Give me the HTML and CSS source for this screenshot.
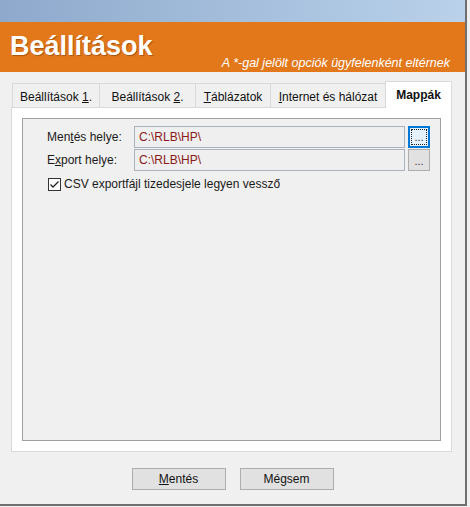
FILE: index.html
```html
<!DOCTYPE html>
<html lang="hu">
<head>
  <meta charset="UTF-8">
  <title>Beállítások</title>
  <link rel="stylesheet" href="styles.css">
</head>
<body>

  <div class="window">
    <div class="topband"></div>

    <div class="banner">
      <h1>Beállítások</h1>
      <span class="note">A *-gal jelölt opciók ügyfelenként eltérnek</span>
    </div>

    <div class="content">
      <div class="tabs">
        <div class="tab tab-1">Beállítások <u>1</u>.</div>
        <div class="tab tab-2">Beállítások <u>2</u>.</div>
        <div class="tab tab-3"><u>T</u>áblázatok</div>
        <div class="tab tab-4"><u>I</u>nternet és hálózat</div>
        <div class="tab tab-5 active">Map<u>p</u>ák</div>
      </div>

      <div class="panel">
        <div class="group">
          <div class="row">
            <label>Men<u>t</u>és helye:</label>
            <div class="field">C:\RLB\HP\</div>
            <button class="browse focused"><span>...</span></button>
          </div>
          <div class="row">
            <label>E<u>x</u>port helye:</label>
            <div class="field">C:\RLB\HP\</div>
            <button class="browse">...</button>
          </div>
          <div class="check">
            <svg width="13" height="13" viewBox="0 0 13 13">
              <rect x="0.5" y="0.5" width="12" height="12" fill="#fff" stroke="#333"/>
              <polyline points="2.5,6.5 5,9 10.5,3.5" fill="none" stroke="#222" stroke-width="1.3"/>
            </svg>
            <span>CSV exportfájl tizedesjele legyen vessző</span>
          </div>
        </div>
      </div>

      <div class="actions">
        <button class="btn"><u>M</u>entés</button>
        <button class="btn">Mé<u>g</u>sem</button>
      </div>
    </div>
  </div>

</body>
</html>
```

FILE: styles.css
```css
/* General Reset */
* {
  margin: 0;
  padding: 0;
  box-sizing: border-box;
}

body {
  font-family: 'Liberation Sans', Arial, sans-serif;
  font-size: 12px;
  background-color: #f0f0f0;
  color: #1a1a1a;
}

u {
  text-decoration: underline;
  text-underline-offset: 1px;
}

/* Window frame */
.window {
  width: 467px;
  height: 506px;
  border-right: 2px solid #6f6f6f;
  border-bottom: 2px solid #6f6f6f;
  background-color: #f0f0f0;
}

.topband {
  height: 22px;
  background: linear-gradient(to right, #8ea9cc, #b9d1ea);
}

/* Orange header */
.banner {
  height: 50px;
  background-color: #e3781b;
  display: flex;
  justify-content: space-between;
  align-items: flex-end;
  padding: 0 15px 0 10px;
}

.banner h1 {
  color: #fff;
  font-size: 27px;
  font-weight: bold;
  line-height: 30px;
  margin-bottom: 11px;
  text-shadow: 1px 1px 1px rgba(90, 40, 0, 0.45);
}

.banner .note {
  color: #fff;
  font-size: 12.5px;
  font-style: italic;
  line-height: 14px;
  margin-bottom: 2px;
}

/* Content */
.content {
  padding: 9px 13px 0 11px;
}

.tabs {
  display: flex;
  align-items: flex-end;
  padding-left: 1px;
}

.tab {
  background-color: #f0f0f0;
  border: 1px solid #d9d9d9;
  border-bottom: none;
  border-right: none;
  padding-top: 3px;
  line-height: 20px;
  text-align: center;
  color: #111;
  white-space: nowrap;
}

.tab-1 { width: 87px; }
.tab-2 { width: 96px; }
.tab-3 { width: 75px; }
.tab-4 { width: 115px; }
.tab-5 { width: 67px; }

.tab.active {
  position: relative;
  z-index: 1;
  background-color: #fff;
  border-right: 1px solid #d9d9d9;
  font-weight: bold;
  padding-bottom: 3px;
  margin-bottom: -1px;
}

.panel {
  height: 345px;
  background-color: #fff;
  border: 1px solid #d9d9d9;
  padding: 10px;
  display: flex;
  flex-direction: column;
}

.group {
  flex: 1;
  background-color: #f0f0f0;
  border: 1px solid #a0a0a0;
  padding: 7px 10px 0 24px;
}

.row {
  display: grid;
  grid-template-columns: 87px 1fr 25px;
  height: 22px;
  margin-bottom: 1px;
}

.row label {
  line-height: 22px;
  color: #1a1a1a;
}

.field {
  border: 1px solid #aab2bd;
  background-color: #efefef;
  color: #8a1a1a;
  line-height: 20px;
  padding-left: 4px;
}

.browse {
  width: 22px;
  margin-left: 3px;
  font-family: inherit;
  font-size: 11px;
  color: #333;
  background-color: #e1e1e1;
  border: 1px solid #adadad;
  line-height: 16px;
  padding-top: 2px;
}

.browse.focused {
  border: 2px solid #0078d7;
  background-color: #e5f1fb;
  padding: 1px;
}

.browse.focused span {
  display: block;
  height: 100%;
  border: 1px dotted #222;
  line-height: 14px;
}

.check {
  display: flex;
  align-items: center;
  gap: 3px;
  margin-top: 6px;
  padding-left: 1px;
  line-height: 14px;
}

/* Bottom buttons */
.actions {
  display: flex;
  justify-content: center;
  gap: 14px;
  padding-top: 16px;
  padding-left: 2px;
}

.btn {
  width: 94px;
  height: 22px;
  font-family: inherit;
  font-size: 12px;
  color: #111;
  background-color: #e1e1e1;
  border: 1px solid #adadad;
}
```
